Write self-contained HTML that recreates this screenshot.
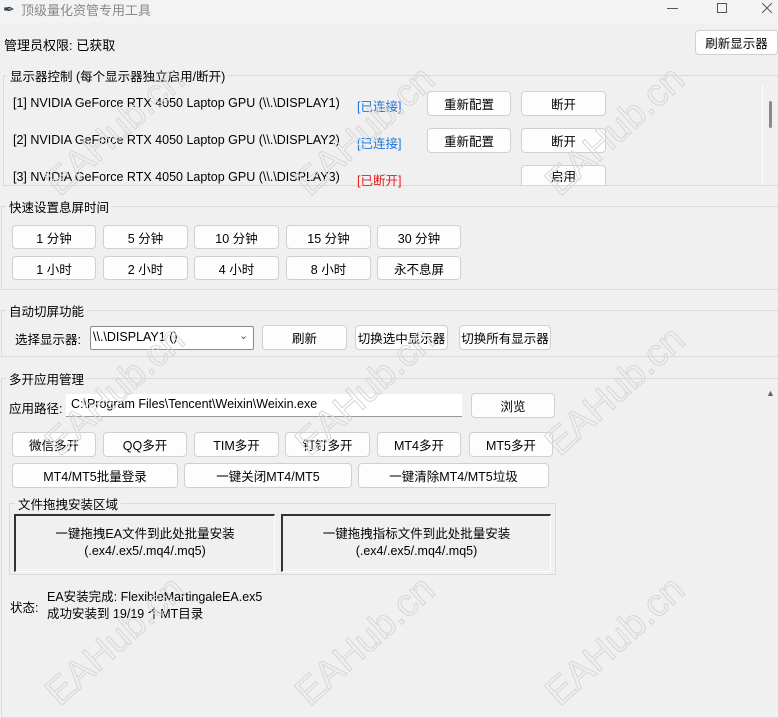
<!DOCTYPE html>
<html><head><meta charset="utf-8"><style>
*{box-sizing:border-box;margin:0;padding:0}
body{width:778px;height:715px;background:#f0f0f0;font-family:"Liberation Sans","Noto Sans CJK SC",sans-serif;font-size:12.5px;color:#000;position:relative;overflow:hidden}
.a{position:absolute;white-space:nowrap}
.b{position:absolute;background:#fdfdfd;border:1px solid #d0d0d0;border-radius:4px;display:flex;align-items:center;justify-content:center;white-space:nowrap;font-size:12.5px}
.f{position:absolute;border:1px solid #dadada}
.lbl{position:absolute;background:#f0f0f0;padding:0 3px;white-space:nowrap}
.wm{position:absolute;font-size:38px;font-family:"Liberation Sans",sans-serif;color:transparent;-webkit-text-stroke:1px #d6d6d6;transform:rotate(-42deg);white-space:nowrap;z-index:5}
</style></head><body>
<div class="a" style="left:0;top:0;width:778px;height:23px;background:#f3f3f3"></div>
<div class="a" style="left:3px;top:1px;font-size:14px;color:#345">&#x2712;</div>
<div class="a" style="left:21px;top:0px;color:#888;font-size:13px">顶级量化资管专用工具</div>
<div class="a" style="left:667px;top:8px;width:11px;height:1px;background:#555"></div>
<div class="a" style="left:717px;top:3px;width:10px;height:10px;border:1px solid #555"></div>
<svg class="a" style="left:762px;top:3px" width="10" height="10"><path d="M0 0L10 10M10 0L0 10" stroke="#555" stroke-width="1"/></svg>

<div class="a" style="left:4px;top:35px;font-size:13px">管理员权限: 已获取</div>
<div class="b" style="left:695px;top:30px;width:83px;height:25px">刷新显示器</div>

<div class="f" style="left:3px;top:75px;width:780px;height:111px"></div>
<div class="lbl" style="left:7px;top:66px">显示器控制 (每个显示器独立启用/断开)</div>
<div class="a" style="left:13px;top:96px">[1] NVIDIA GeForce RTX 4050 Laptop GPU (\\.\DISPLAY1)</div>
<div class="a" style="left:357px;top:96px;color:#1a73d8">[已连接]</div>
<div class="a" style="left:13px;top:133px">[2] NVIDIA GeForce RTX 4050 Laptop GPU (\\.\DISPLAY2)</div>
<div class="a" style="left:357px;top:133px;color:#1a73d8">[已连接]</div>
<div class="a" style="left:13px;top:170px">[3] NVIDIA GeForce RTX 4050 Laptop GPU (\\.\DISPLAY3)</div>
<div class="a" style="left:357px;top:170px;color:#e02020">[已断开]</div>
<div class="b" style="left:427px;top:91px;width:84px;height:25px">重新配置</div>
<div class="b" style="left:521px;top:91px;width:85px;height:25px">断开</div>
<div class="b" style="left:427px;top:128px;width:84px;height:25px">重新配置</div>
<div class="b" style="left:521px;top:128px;width:85px;height:25px">断开</div>
<div class="b" style="left:521px;top:165px;width:85px;height:20px;border-bottom:none;border-radius:4px 4px 0 0">启用</div>
<div class="a" style="left:762px;top:85px;width:16px;height:100px;background:#f0f0f0;border-left:1px solid #fff"></div>
<div class="a" style="left:769px;top:101px;width:3px;height:27px;background:#8a8a8a;border-radius:2px"></div>

<div class="f" style="left:1px;top:206px;width:790px;height:84px"></div>
<div class="lbl" style="left:6px;top:197px">快速设置息屏时间</div>
<div class="b" style="left:12px;top:225px;width:84px;height:24px">1 分钟</div>
<div class="b" style="left:103px;top:225px;width:85px;height:24px">5 分钟</div>
<div class="b" style="left:194px;top:225px;width:85px;height:24px">10 分钟</div>
<div class="b" style="left:286px;top:225px;width:85px;height:24px">15 分钟</div>
<div class="b" style="left:377px;top:225px;width:84px;height:24px">30 分钟</div>
<div class="b" style="left:12px;top:256px;width:84px;height:24px">1 小时</div>
<div class="b" style="left:103px;top:256px;width:85px;height:24px">2 小时</div>
<div class="b" style="left:194px;top:256px;width:85px;height:24px">4 小时</div>
<div class="b" style="left:286px;top:256px;width:85px;height:24px">8 小时</div>
<div class="b" style="left:377px;top:256px;width:84px;height:24px">永不息屏</div>

<div class="f" style="left:1px;top:310px;width:790px;height:47px"></div>
<div class="lbl" style="left:6px;top:301px">自动切屏功能</div>
<div class="a" style="left:15px;top:329px">选择显示器:</div>
<div class="a" style="left:90px;top:326px;width:164px;height:24px;background:#fff;border:1px solid #8a8a8a;border-radius:2px;padding:3px 2px">\\.\DISPLAY1 ()</div>
<div class="a" style="left:239px;top:329px;color:#555;font-size:11px">&#x2304;</div>
<div class="b" style="left:262px;top:325px;width:85px;height:25px">刷新</div>
<div class="b" style="left:355px;top:325px;width:93px;height:25px">切换选中显示器</div>
<div class="b" style="left:459px;top:325px;width:92px;height:25px">切换所有显示器</div>

<div class="f" style="left:1px;top:378px;width:790px;height:340px"></div>
<div class="lbl" style="left:6px;top:369px">多开应用管理</div>
<div class="a" style="left:762px;top:386px;width:16px;height:329px;background:#f0f0f0"></div>
<div class="a" style="left:766px;top:388px;font-size:9px;color:#666">▲</div>
<div class="a" style="left:9px;top:398px">应用路径:</div>
<div class="a" style="left:66px;top:394px;width:396px;height:23px;background:#fff;border-bottom:1px solid #999;padding:3px 5px">C:\Program Files\Tencent\Weixin\Weixin.exe</div>
<div class="b" style="left:471px;top:393px;width:84px;height:25px">浏览</div>
<div class="b" style="left:12px;top:432px;width:84px;height:25px">微信多开</div>
<div class="b" style="left:103px;top:432px;width:84px;height:25px">QQ多开</div>
<div class="b" style="left:194px;top:432px;width:85px;height:25px">TIM多开</div>
<div class="b" style="left:285px;top:432px;width:85px;height:25px">钉钉多开</div>
<div class="b" style="left:377px;top:432px;width:84px;height:25px">MT4多开</div>
<div class="b" style="left:469px;top:432px;width:84px;height:25px">MT5多开</div>
<div class="b" style="left:12px;top:463px;width:166px;height:25px">MT4/MT5批量登录</div>
<div class="b" style="left:184px;top:463px;width:168px;height:25px">一键关闭MT4/MT5</div>
<div class="b" style="left:358px;top:463px;width:191px;height:25px">一键清除MT4/MT5垃圾</div>

<div class="f" style="left:9px;top:503px;width:547px;height:72px"></div>
<div class="lbl" style="left:15px;top:494px">文件拖拽安装区域</div>
<div class="a" style="left:14px;top:514px;width:261px;height:58px;border:1px solid #fff;border-top:2px solid #333;border-left:2px solid #333;text-align:center;padding-top:10px;line-height:17px">一键拖拽EA文件到此处批量安装<br>(.ex4/.ex5/.mq4/.mq5)</div>
<div class="a" style="left:281px;top:514px;width:270px;height:58px;border:1px solid #fff;border-top:2px solid #333;border-left:2px solid #333;text-align:center;padding-top:10px;line-height:17px">一键拖拽指标文件到此处批量安装<br>(.ex4/.ex5/.mq4/.mq5)</div>

<div class="a" style="left:10px;top:597px">状态:</div>
<div class="a" style="left:47px;top:589px;line-height:17px">EA安装完成: FlexibleMartingaleEA.ex5<br>成功安装到 19/19 个MT目录</div>

<div class="wm" style="left:30px;top:110px">EAHub.cn</div>
<div class="wm" style="left:280px;top:110px">EAHub.cn</div>
<div class="wm" style="left:530px;top:110px">EAHub.cn</div>
<div class="wm" style="left:30px;top:370px">EAHub.cn</div>
<div class="wm" style="left:280px;top:370px">EAHub.cn</div>
<div class="wm" style="left:530px;top:370px">EAHub.cn</div>
<div class="wm" style="left:30px;top:620px">EAHub.cn</div>
<div class="wm" style="left:280px;top:620px">EAHub.cn</div>
<div class="wm" style="left:530px;top:620px">EAHub.cn</div>
</body></html>
